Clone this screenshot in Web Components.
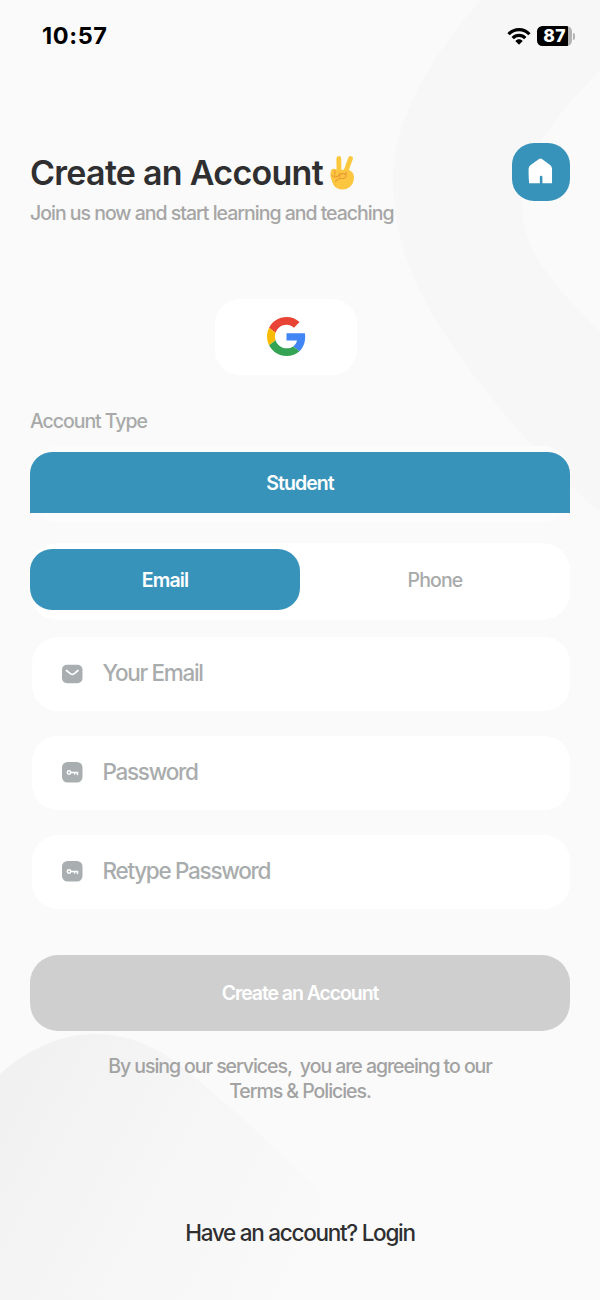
<!DOCTYPE html>
<html lang="en">
<head>
<meta charset="utf-8">
<title>Create an Account</title>
<style>
html,body{margin:0;padding:0;background:#fafafa}
body{font-family:Inter,"Liberation Sans",sans-serif;color:#2f2f31}
</style>
</head>
<body>
<signup-page></signup-page>
<script>
const define = (name, html) => customElements.define(name, class extends HTMLElement {
  constructor() {
    super();
    const t = document.createElement('template');
    t.innerHTML = html;
    this.attachShadow({mode: 'open'}).append(t.content.cloneNode(true));
  }
});

define('page-backdrop', `
<style>:host{position:absolute;inset:0;z-index:0;overflow:hidden}svg{display:block}</style>
<svg width="600" height="1300" viewBox="0 0 600 1300">
  <defs><linearGradient id="g" x1="0" y1="1110" x2="330" y2="1290" gradientUnits="userSpaceOnUse">
    <stop offset="0" stop-color="#f1f1f1"/><stop offset=".45" stop-color="#f6f6f6"/><stop offset="1" stop-color="#fafafa"/></linearGradient></defs>
  <path fill="#f7f7f7" d="M481 0C440 45 393 115 393 180C393 265 438 330 490 396C530 447 565 482 600 512V333C568 298 522 258 522 205C522 150 563 110 600 70V0Z"/>
  <path fill="url(#g)" d="M0 1074C26 1051 58 1034 95 1034C134 1034 168 1053 192 1075C245 1120 280 1150 318 1192C350 1226 376 1258 396 1300H0Z"/>
</svg>`);

define('status-bar', `
<style>
:host{display:flex;justify-content:space-between;align-items:center;height:20px;padding:0 25px 0 42px;color:#000}
.time{font-size:23.500px;font-weight:700;line-height:20px;letter-spacing:.6px}
.right{display:flex;align-items:center;gap:6px}
.bat{display:flex;align-items:center}
.cell{box-sizing:border-box;width:35px;height:20px;border-radius:5.5px;background:linear-gradient(90deg,#000 0 31px,#b3b3b3 31px);color:#fff;font-size:17.500px;font-weight:800;line-height:20px;text-align:center;letter-spacing:.3px}
.tip{width:2px;height:7px;margin-left:1px;border-radius:0 3px 3px 0;background:#b3b3b3}
svg{display:block}
</style>
<span class="time">10:57</span>
<span class="right">
  <svg width="24" height="18" viewBox="0 0 24 18" fill="none" stroke="#000" stroke-width="3.2"><path d="M1.6 7.2C7.2 1 16.8 1 22.4 7.2"/><path d="M5.7 11.2C9.2 7.5 14.8 7.5 18.3 11.2"/><path d="M8.3 13.9C10.2 11.7 13.8 11.7 15.7 13.9L12 17.8Z" fill="#000" stroke="none"/></svg>
  <span class="bat"><span class="cell">87</span><span class="tip"></span></span>
</span>`);

define('victory-hand', `
<style>:host{display:block}svg{display:block}</style>
<svg width="26" height="36" viewBox="0 0 26 36">
  <path d="M10 18L9.800 3.500M16.300 18L21.500 3.500" stroke="#fbc83d" stroke-width="4.800" stroke-linecap="round"/>
  <path fill="#fcc640" d="M1.5 18Q2 13 6 14L9 15L18 14.5Q25 16 25 22Q25 29 20 32.5Q16 35.5 10 34Q5 32.5 3.2 27Q1 22 1.5 18Z"/>
  <path d="M5.8 15.5V20.5M10.6 18V22M2.5 20Q6 24 9.8 20.5M10.5 20Q15 17 17.2 20.5Q17 24 11 23.5M11 23.5Q8 24 6.500 26.500M17 17V20" fill="none" stroke="#eb9a35" stroke-width="1.100" stroke-linecap="round"/>
</svg>`);

define('home-button', `
<style>:host{display:flex;align-items:center;justify-content:center;width:58px;height:58px;border-radius:22px;background:#3893bb}svg{display:block;margin:0 2px 2px 0}</style>
<svg width="25" height="26" viewBox="0 0 26 26" preserveAspectRatio="none"><path fill="#fff" d="M11.5 1Q13 .2 14.5 1L23 7Q25 8.600 25 11V25.300H15V19Q15 17.800 13.700 17.800Q12.300 17.800 12.300 19V25.300H1.200Q.6 20 .6 11Q.6 8.600 2.800 7Z"/></svg>`);

define('page-header', `
<style>
:host{display:flex;justify-content:space-between;align-items:flex-start;height:86px}
h1{margin:10px 0 0;font-size:34px;font-weight:600;line-height:40px;letter-spacing:-.72px;white-space:nowrap;display:flex;gap:6px;align-items:center}
victory-hand{margin-top:-1px}
p{margin:8px 0 0;font-size:19.500px;font-weight:500;line-height:24px;letter-spacing:-1.010px;color:#a6a6a6;white-space:nowrap}
</style>
<div><h1><slot name="title"></slot><victory-hand></victory-hand></h1><p><slot name="sub"></slot></p></div>
<home-button></home-button>`);

define('google-button', `
<style>:host{display:flex;align-items:center;justify-content:center;width:142px;height:76px;border-radius:25px;background:#fff}svg{display:block;margin-bottom:2px}</style>
<svg width="39" height="39" viewBox="0 0 48 48"><path fill="#e94335" d="M24 9.500c3.540 0 6.710 1.220 9.210 3.600l6.850-6.850C35.900 2.380 30.470 0 24 0 14.620 0 6.510 5.380 2.560 13.220l7.980 6.190C12.430 13.720 17.740 9.500 24 9.500z"/><path fill="#4285f4" d="M46.980 24.550c0-1.570-.15-3.090-.38-4.550H24v9.020h12.940c-.58 2.960-2.260 5.480-4.780 7.180l7.730 6c4.510-4.180 7.090-10.360 7.090-17.650z"/><path fill="#fbbc05" d="M10.530 28.590c-.48-1.450-.76-2.990-.76-4.590s.27-3.140.76-4.590l-7.980-6.190C.92 16.460 0 20.120 0 24s.92 7.540 2.560 10.780l7.970-6.190z"/><path fill="#34a353" d="M24 48c6.480 0 11.930-2.130 15.890-5.810l-7.730-6c-2.150 1.450-4.920 2.300-8.160 2.300-6.260 0-11.570-4.220-13.470-9.910l-7.980 6.190C6.510 42.620 14.620 48 24 48z"/></svg>`);

define('segment-option', `
<style>
:host{display:flex;flex:1;align-items:center;justify-content:center;height:61px;color:#a8aaaa;font-size:19.500px;font-weight:500;letter-spacing:-.85px}
:host([active]){background:#3893bb;border-radius:22px;color:#fff;font-weight:600;letter-spacing:-.9px}
:host([flat]){border-radius:22px 22px 0 0}
</style><slot></slot>`);

define('segment-group', `
<style>:host{display:flex;box-sizing:border-box;height:77px;padding:6px 0 10px;border-radius:28px;background:#fff}
:host([soft]){background:#fcfcfc}</style><slot></slot>`);

define('mail-icon', `
<style>:host,svg{display:block}</style>
<svg width="21" height="20" viewBox="0 0 21 20"><rect width="20.500" height="18.500" y=".8" rx="5" fill="#a9afb0"/><path d="M4.500 6.500L8.300 9.600Q10.300 11 12.300 9.600L16 6.500" fill="none" stroke="#fff" stroke-width="1.700" stroke-linecap="round"/></svg>`);

define('key-icon', `
<style>:host,svg{display:block}:host{margin-bottom:1px}</style>
<svg width="21" height="21" viewBox="0 0 21 21"><rect width="20.500" height="20.500" rx="5.500" fill="#a9afb0"/><g fill="none" stroke="#fff" stroke-width="1.500" stroke-linecap="round"><circle cx="7" cy="10.500" r="1.700"/><path d="M9.200 10.400H15.500V12.400M12.700 10.600V12"/></g></svg>`);

define('form-field', `
<style>:host{display:flex;align-items:center;gap:19.500px;box-sizing:border-box;margin-left:2px;padding:0 30px 0 30px;height:74px;border-radius:26px;background:#fff;color:#a9acad;font-size:22.500px;font-weight:500;letter-spacing:-1.300px}
.t{padding-bottom:4px}</style>
<slot name="icon"></slot><span class="t"><slot></slot></span>`);

define('submit-button', `
<style>:host{display:flex;align-items:center;justify-content:center;height:76px;border-radius:28px;background:#cfcfcf;color:#fff;font-size:19.500px;font-weight:600;letter-spacing:-1.080px}</style><slot></slot>`);

define('signup-page', `
<style>
:host{display:block;position:relative;width:600px;height:1300px;overflow:hidden;background:#fafafa}
main{position:relative;z-index:1;padding-top:26px}
.body{padding:97px 30px 0;display:flex;flex-direction:column}
google-button{align-self:center;margin:70px 0 0;transform:translateX(-14px)}
.label{margin:34px 0 13px;font-size:19.500px;font-weight:500;line-height:24px;letter-spacing:-1.050px;color:#a8aaaa}
.tabs{margin-top:20px}
.fields{display:flex;flex-direction:column;gap:25px;margin-top:17px}
submit-button{margin-top:46px}
.legal{margin:23px 0 0;text-align:center;color:#a2a2a2;font-size:19.500px;font-weight:500;line-height:25px;letter-spacing:-1.050px;white-space:pre}
.login{margin:115px 0 0;text-align:center;font-size:22.500px;font-weight:500;line-height:28px;letter-spacing:-1.280px}
</style>
<page-backdrop></page-backdrop>
<main>
  <status-bar></status-bar>
  <div class="body">
    <page-header><span slot="title">Create an Account</span><span slot="sub">Join us now and start learning and teaching</span></page-header>
    <google-button></google-button>
    <div class="label">Account Type</div>
    <segment-group soft><segment-option active flat>Student</segment-option></segment-group>
    <segment-group class="tabs"><segment-option active>Email</segment-option><segment-option>Phone</segment-option></segment-group>
    <div class="fields">
      <form-field><mail-icon slot="icon"></mail-icon>Your Email</form-field>
      <form-field><key-icon slot="icon"></key-icon>Password</form-field>
      <form-field><key-icon slot="icon"></key-icon>Retype Password</form-field>
    </div>
    <submit-button>Create an Account</submit-button>
    <p class="legal">By using our services,  you are agreeing to our
Terms &amp; Policies.</p>
    <p class="login">Have an account? Login</p>
  </div>
</main>`);
</script>
</body>
</html>
